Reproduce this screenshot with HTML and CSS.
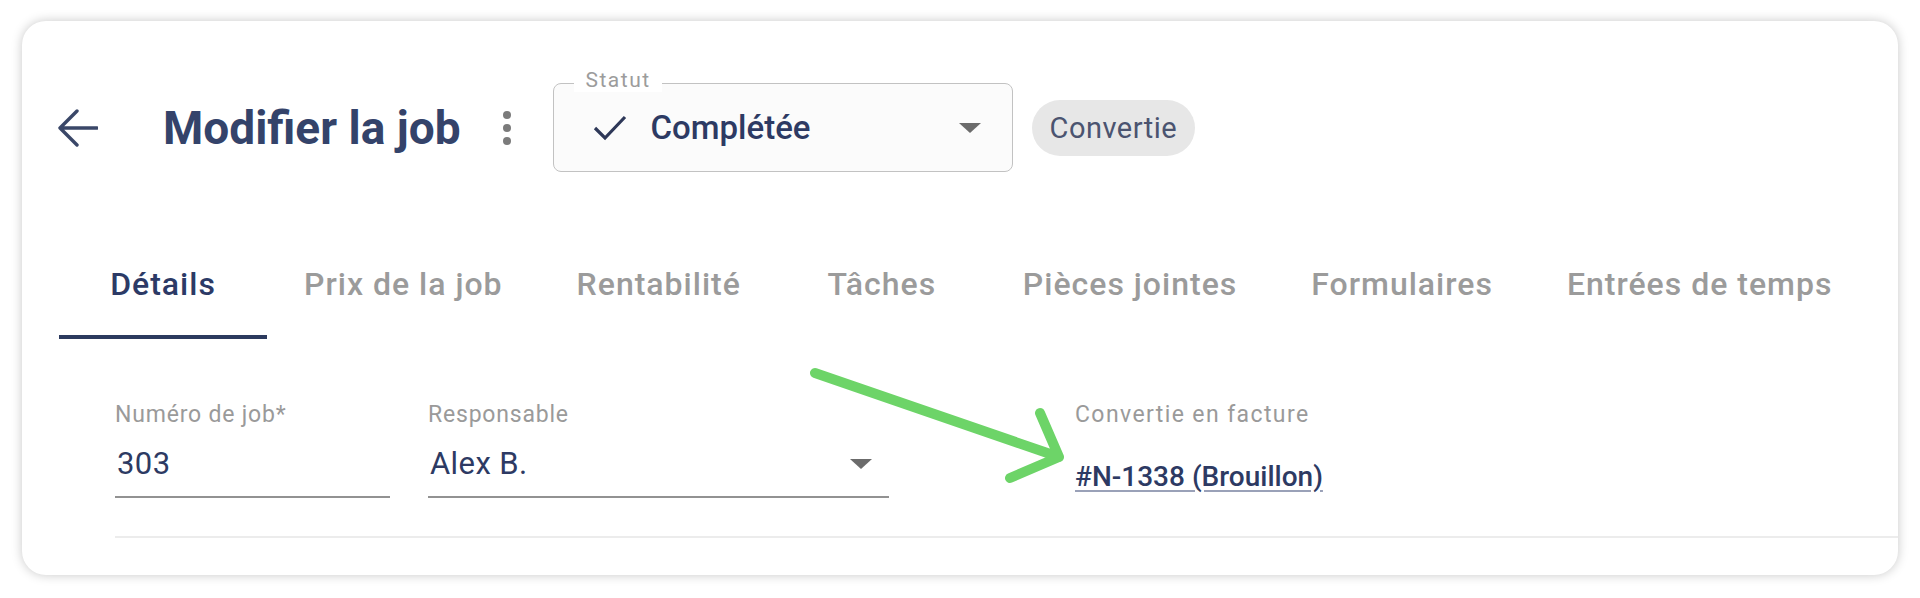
FILE: index.html
```html
<!DOCTYPE html>
<html>
<head>
    <meta charset="UTF-8">
    <title>Modifier la job</title>
    <link rel="stylesheet" href="styles.css">
</head>
<body>
    <div class="card">
        <!-- Header -->
        <div class="header">
            <span class="back">
                <svg width="40" height="38" viewBox="0 0 40 38">
                    <path d="M39 19H2M19 2L2 19l17 17" fill="none" stroke="currentColor" stroke-width="3.4" stroke-linecap="round" stroke-linejoin="round"/>
                </svg>
            </span>
            <h1 class="title">Modifier la job</h1>
            <span class="kebab"><i></i><i></i><i></i></span>

            <div class="status-select">
                <span class="status-label">Statut</span>
                <svg class="check" width="34" height="26" viewBox="0 0 34 26">
                    <path d="M2 13l10 10L32 2" fill="none" stroke="currentColor" stroke-width="3.2"/>
                </svg>
                <span class="status-value">Complétée</span>
                <span class="caret"></span>
            </div>

            <span class="chip">Convertie</span>
        </div>

        <!-- Tabs -->
        <div class="tabs">
            <div class="tab active">Détails</div>
            <div class="tab">Prix de la job</div>
            <div class="tab">Rentabilité</div>
            <div class="tab">Tâches</div>
            <div class="tab">Pièces jointes</div>
            <div class="tab">Formulaires</div>
            <div class="tab">Entrées de temps</div>
        </div>

        <!-- Fields -->
        <div class="fields">
            <div class="field field-number">
                <div class="field-label">Numéro de job*</div>
                <div class="field-value">303</div>
            </div>
            <div class="field field-owner">
                <div class="field-label">Responsable</div>
                <div class="field-value">Alex B.<span class="caret small"></span></div>
            </div>
            <div class="field-invoice">
                <div class="field-label spaced">Convertie en facture</div>
                <a class="invoice-link" href="#">#N-1338 (Brouillon)</a>
            </div>
        </div>
        <div class="divider"></div>

        <!-- annotation arrow -->
        <svg class="annotation" width="1876" height="554" viewBox="0 0 1876 554">
            <path d="M793 352L1037 436M1018 392L1037 436L988 457" fill="none" stroke="#6dd468" stroke-width="10" stroke-linecap="round" stroke-linejoin="round"/>
        </svg>
    </div>
</body>
</html>
```

FILE: styles.css
```css
body {
    margin: 0;
    background-color: #fff;
    font-family: Roboto, "Liberation Sans", sans-serif;
}

.card {
    position: relative;
    margin: 21px 22px;
    background-color: #fff;
    border-radius: 24px;
    box-shadow: 0 0 11px rgba(0, 0, 0, 0.22);
    overflow: hidden;
}

/* Header */
.header {
    display: flex;
    align-items: center;
    padding: 62px 0 0 36px;
}

.back {
    display: flex;
    width: 40px;
    color: #3a4768;
}

.title {
    margin: 0 0 0 65px;
    font-size: 46px;
    font-weight: 700;
    color: #34436a;
    line-height: 54px;
}

.kebab {
    display: flex;
    flex-direction: column;
    gap: 5px;
    margin-left: 42px;
}

.kebab i {
    display: block;
    width: 8px;
    height: 8px;
    border-radius: 50%;
    background-color: #7b7b7b;
}

.status-select {
    position: relative;
    display: flex;
    align-items: center;
    box-sizing: border-box;
    width: 460px;
    height: 89px;
    margin-left: 42px;
    padding: 0 31px 0 39px;
    border: 1.5px solid #c2c2c2;
    border-radius: 8px;
    background-color: #fbfbfb;
}

.status-label {
    position: absolute;
    left: 20px;
    top: -16px;
    padding: 0 11px 0 12px;
    font-size: 21px;
    letter-spacing: 1.5px;
    line-height: 24px;
    color: #9c9c9c;
    background-color: #fff;
}

.check {
    color: #2e3858;
}

.status-value {
    flex: 1;
    margin-left: 24px;
    font-size: 33px;
    font-weight: 500;
    color: #2d3a63;
}

.caret {
    width: 0;
    height: 0;
    border-left: 11px solid transparent;
    border-right: 11px solid transparent;
    border-top: 10px solid #6b6b6b;
}

.chip {
    margin-left: 19px;
    padding: 0 18px;
    height: 56px;
    line-height: 56px;
    border-radius: 28px;
    background-color: #e7e7e7;
    font-size: 29px;
    letter-spacing: 0.5px;
    color: #4b5470;
}

/* Tabs */
.tabs {
    display: flex;
    margin-top: 94px;
    padding-left: 37px;
}

.tab {
    min-width: 208px;
    box-sizing: border-box;
    padding: 0 37px 33px;
    border-bottom: 4px solid transparent;
    text-align: center;
    font-size: 32px;
    font-weight: 500;
    letter-spacing: 1px;
    line-height: 36px;
    color: #9b9b9b;
}

.tab.active {
    color: #2c3a66;
    border-bottom-color: #2c3a5e;
}

/* Fields */
.fields {
    display: flex;
    margin-top: 62px;
    padding-left: 93px;
}

.field {
    border-bottom: 2px solid #929292;
    padding-bottom: 14px;
}

.field-number {
    width: 275px;
}

.field-owner {
    width: 461px;
    margin-left: 38px;
}

.field-label {
    font-size: 23px;
    letter-spacing: 0.8px;
    line-height: 28px;
    color: #9a9a9a;
}

.field-label.spaced {
    letter-spacing: 1.4px;
}

.field-value {
    display: flex;
    align-items: center;
    justify-content: space-between;
    margin-top: 17px;
    padding-left: 2px;
    font-size: 31px;
    letter-spacing: 0.4px;
    line-height: 36px;
    color: #2d3a63;
}

.caret.small {
    margin-right: 17px;
}

.field-invoice {
    margin-left: 186px;
}

.invoice-link {
    display: inline-block;
    margin-top: 31px;
    font-size: 28px;
    font-weight: 500;
    line-height: 34px;
    color: #2d3a63;
    text-decoration: underline;
    text-decoration-color: #9aa1b8;
    text-underline-offset: 4px;
}

.divider {
    margin: 38px 0 37px 93px;
    border-top: 2px solid #ececec;
}

.annotation {
    position: absolute;
    left: 0;
    top: 0;
    pointer-events: none;
}
```
